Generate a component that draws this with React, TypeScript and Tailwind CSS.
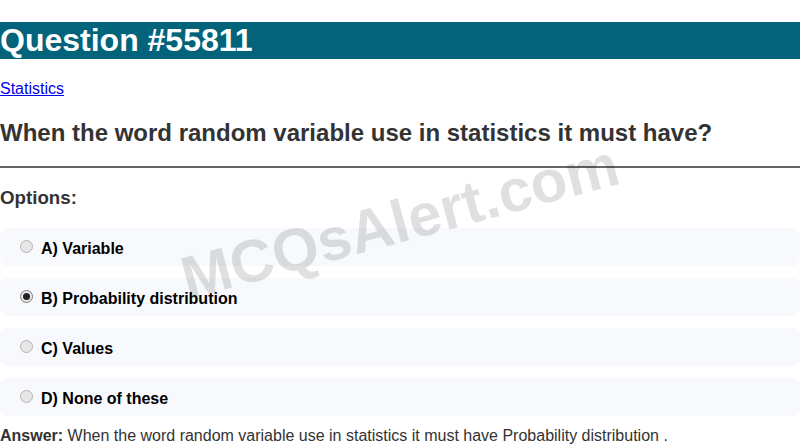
import React from 'react';

interface Option {
  key: string;
  text: string;
}

const options: Option[] = [
  { key: 'A', text: 'Variable' },
  { key: 'B', text: 'Probability distribution' },
  { key: 'C', text: 'Values' },
  { key: 'D', text: 'None of these' },
];

const selected = 'B';

const Radio = ({ checked }: { checked: boolean }) =>
  checked ? (
    <span className="flex h-[13px] w-[13px] shrink-0 items-center justify-center rounded-full border border-[#7a7a7a] bg-[#e9e9e9]">
      <span className="h-[7px] w-[7px] rounded-full bg-[#222]" />
    </span>
  ) : (
    <span className="h-[13px] w-[13px] shrink-0 rounded-full border border-[#b4b4b4] bg-[#e6e6e6]" />
  );

export default function App() {
  return (
    <div className="relative w-[800px] h-[446px] overflow-hidden bg-white font-['Liberation_Sans',Arial,sans-serif] text-[16px]">
      <div className="flex flex-col pt-[22px]">
        <h1 className="h-[37px] bg-[#02637a] text-[32px] font-bold leading-[37px] text-white">
          Question #55811
        </h1>
        <a href="#" className="mt-[21px] self-start text-[16px] leading-[18px] text-[#0000ee] underline">
          Statistics
        </a>
        <h2 className="mt-[21px] text-[24px] font-bold leading-[28px] text-[#333]">
          When the word random variable use in statistics it must have?
        </h2>
        <div className="mt-[19px] h-[2px] bg-[#666]" />
        <h3 className="mt-[19px] text-[18.72px] font-bold leading-[21px] text-[#333]">Options:</h3>
        <div className="mt-[20px] flex flex-col gap-[12px]">
          {options.map((opt) => (
            <div key={opt.key} className="flex h-[38px] items-start rounded-[8px] bg-[#f8f9fc] pl-[20px] pt-[12px]">
              <Radio checked={opt.key === selected} />
              <span className="ml-[8px] font-bold leading-[18px] text-black">
                {opt.key}) {opt.text}
              </span>
            </div>
          ))}
        </div>
        <p className="mt-[11px] leading-[18px] text-[#333]">
          <span className="font-bold">Answer:</span> When the word random variable use in statistics it must have Probability distribution .
        </p>
      </div>
      <div className="pointer-events-none absolute left-[400px] top-[222px] -translate-x-1/2 -translate-y-1/2 -rotate-[15deg] whitespace-nowrap text-[60px] font-bold leading-none text-black/[0.12]">
        MCQsAlert.com
      </div>
    </div>
  );
}
